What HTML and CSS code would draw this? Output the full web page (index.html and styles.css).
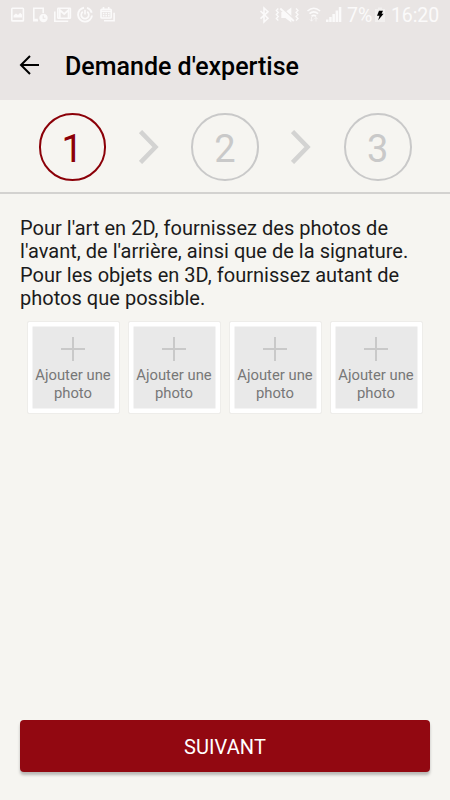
FILE: index.html
```html
<!DOCTYPE html>
<html lang="fr">
<head>
<meta charset="utf-8">
<title>Demande d'expertise</title>
<link rel="stylesheet" href="styles.css">
</head>
<body>
<div class="screen">
  <header class="top">
    <div class="status">
      <svg class="notifications" width="120" height="30" viewBox="0 0 120 30" fill="none" stroke="#fbfafa" stroke-width="1.6">
        <rect x="11.8" y="8.3" width="11.6" height="12.6" rx=".7"/>
        <path d="M13.500 17.500v-2l2.500-2 2 1.500 2.200-2.300 1.800 1.800v3z" fill="#fbfafa" stroke="none"/>
        <path d="M38 20.800h-4.200V8.300h9.400V13M33.800 19.500h4"/>
        <circle cx="43.500" cy="18" r="4.200" fill="#fbfafa" stroke="none"/>
        <path d="M43.200 15.500v2.800h2.300" stroke="#e9e5e4" stroke-width="1.1"/>
        <path d="M54.800 11.500v9.700h13.400"/>
        <rect x="57.800" y="8.200" width="12.600" height="10" rx=".5"/>
        <path d="M59.800 18V10l4.400 4 4.400-4v8" stroke-width="1.8"/>
        <path d="M84 7.700a7 7 0 1 0 8 7.800M87 7.900a7 7 0 0 1 4.700 4.800" stroke-width="1.9"/>
        <path d="M82.800 11.800a3.800 3.800 0 1 0 4.400 0M85 9.800v4.700" stroke-width="1.7"/>
        <rect x="101" y="9.300" width="10.200" height="8.700" rx=".8"/>
        <path d="M103.500 7v3M108.700 7v3M104 20.800h10.100v-8M101 11.200h10"/>
        <path d="M102.800 13.500h7M102.800 15.800h7" stroke-dasharray="1.600 1"/>
      </svg>
      <svg class="signals" width="86" height="30" viewBox="0 0 86 30" fill="none" stroke="#fbfafa" stroke-width="1.6">
        <path d="M2.500 11l7.500 7.300-4 3.700V8l4 3.700-7.500 7"/>
        <g transform="translate(1.800 0)">
          <path d="M21.500 12h4l6-4.500v15l-6-4.500h-4z" fill="#fbfafa" stroke="none"/>
          <path d="M21.500 7.500l13 12" stroke="#e9e5e4" stroke-width="1.400"/>
          <path d="M20.500 8.500l13.500 12.500" stroke-width="1.800"/>
          <path d="M18.500 8.500l-2 2 2 2-2 2 2 2-2 2 2 2M36.200 8.500l2 2-2 2 2 2-2 2 2 2-2 2" stroke-width="1.300"/>
        </g>
        <g transform="translate(2 0)">
          <path d="M47.500 11q6.300-5.500 12.600 0M49.500 13.700q4.300-3.700 8.600 0M51.500 16.300q2.300-2 4.600 0" stroke-width="1.600"/>
          <path d="M51.500 17v4m-1.600-1.600l1.600 1.800 1.600-1.800M56 21.500v-4m-1.600 1.600l1.600-1.800 1.600 1.800" stroke-width="1" opacity=".7"/>
          <path d="M66 22v-2.500h2.500V22zM69.200 22v-5h2.500v5zM72.400 22v-8h2.500v8zM75.600 22V10.500h2.500V22zM78.800 22V7h2.500v15z" fill="#fbfafa" stroke="none"/>
        </g>
      </svg>
      <span class="percent">7%</span>
      <svg class="battery" width="10" height="30" viewBox="0 0 10 30">
        <path d="M0 9h3V7.500h4V9h3v13H0z" fill="#f2f0ef"/>
        <path d="M4 10.800h4L6.600 13.700h2L3.200 20.300l1.300-4.500H2z" fill="#000"/>
      </svg>
      <time class="clock">16:20</time>
    </div>
    <div class="title-bar">
      <svg class="back" width="22" height="20" viewBox="0 0 22 20" fill="none" stroke="#000" stroke-width="2"><path d="M20 10H2M11 1L2 10l9 9"/></svg>
      <h1>Demande d'expertise</h1>
    </div>
  </header>
  <nav class="steps">
    <span class="step active">1</span>
    <svg class="chevron" width="20" height="34" viewBox="0 0 20 34"><path d="M1.500 1.500L16.500 17l-15 15.500" fill="none" stroke="#d3d3d2" stroke-width="4.500"/></svg>
    <span class="step">2</span>
    <svg class="chevron" width="20" height="34" viewBox="0 0 20 34"><path d="M1.500 1.500L16.500 17l-15 15.500" fill="none" stroke="#d3d3d2" stroke-width="4.500"/></svg>
    <span class="step">3</span>
  </nav>
  <main>
    <p class="help">Pour l'art en 2D, fournissez des photos de<br>l'avant, de l'arrière, ainsi que de la signature.<br>Pour les objets en 3D, fournissez autant de<br>photos que possible.</p>
    <div class="photos">
      <div class="photo"><span class="plus"></span>Ajouter une<br>photo</div>
      <div class="photo"><span class="plus"></span>Ajouter une<br>photo</div>
      <div class="photo"><span class="plus"></span>Ajouter une<br>photo</div>
      <div class="photo"><span class="plus"></span>Ajouter une<br>photo</div>
    </div>
  </main>
  <button class="next">SUIVANT</button>
</div>
</body>
</html>
```
FILE: styles.css
```css
* { box-sizing: border-box; }
body { margin: 0; background: #f6f5f1; font-family: Roboto, "Liberation Sans", sans-serif; }
svg { display: block; flex: none; }
.screen { width: 450px; height: 800px; display: flex; flex-direction: column; overflow: hidden; }
.top { height: 100px; background: #e9e5e4; }
.status { height: 30px; display: flex; color: #fbfafa; font-size: 19.5px; line-height: 32px; white-space: nowrap; }
.signals { margin-left: 138px; }
.percent { width: 27px; margin-left: 3px; }
.battery { margin-left: 1px; }
.clock { margin-left: 6px; letter-spacing: -.1px; }
.title-bar { height: 70px; display: flex; align-items: center; padding-left: 19px; }
.back { margin-right: 24px; }
h1 { margin: 4px 0 0; font-size: 25px; line-height: 30px; font-weight: 500; color: #000; white-space: nowrap; }
.steps { height: 94px; padding: 2px 38.5px 0; display: flex; align-items: center; justify-content: space-between; border-bottom: 2px solid #d3d2d0; }
.step { width: 67.5px; height: 67.5px; border: 2px solid #c9c9c9; border-radius: 50%; color: #c9c9c9; font-size: 38px; line-height: 68px; text-align: center; }
.step.active { border-color: #8b0008; color: #8b0008; }
main { flex: 1; padding: 23px 20px 0; }
.help { margin: 0; font-size: 20px; line-height: 23.4px; letter-spacing: .025px; color: #1b1b1b; white-space: nowrap; }
.photos { display: flex; gap: 8px; margin: 10.4px 0 0 6.5px; }
.photo { width: 93px; height: 93px; border: 1px solid #eeedea; border-radius: 2px; background: #e9e9e9; box-shadow: inset 0 0 0 4.5px #fff; color: #777; font-size: 14.8px; line-height: 18px; text-align: center; white-space: nowrap; padding-top: 15px; }
.plus { display: block; width: 24px; height: 24px; margin: 0 auto 5px; background: linear-gradient(#c9c9c9, #c9c9c9) center / 2px 24px no-repeat, linear-gradient(#c9c9c9, #c9c9c9) center / 24px 2px no-repeat; }
.next { height: 52px; margin: 0 20px 28px; border: 0; border-radius: 4px; background: #920811; color: #fff; font: 20px/54px Roboto, sans-serif; letter-spacing: .1px; padding: 0; box-shadow: 0 3px 3px rgba(0, 0, 0, .25); }
```
